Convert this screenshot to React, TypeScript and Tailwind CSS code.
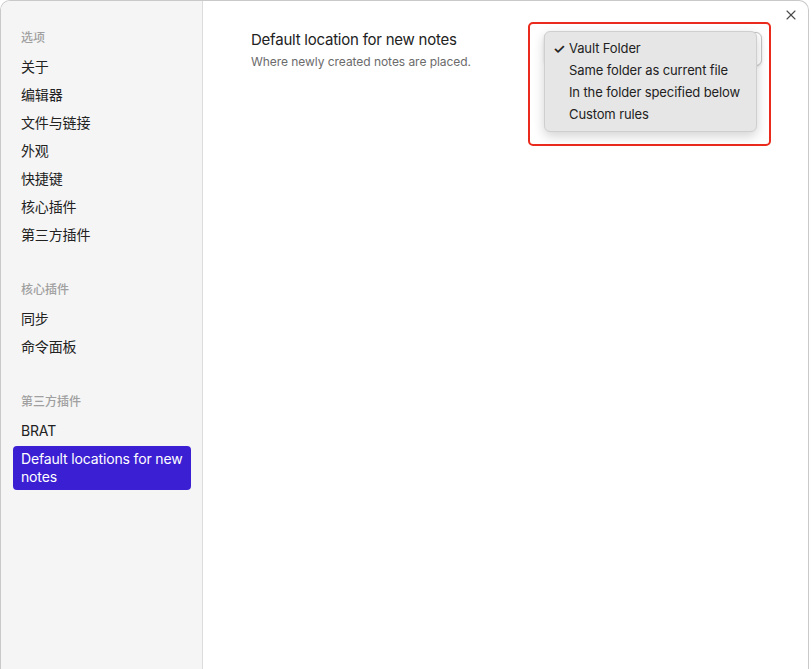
import { X } from 'lucide-react';

const groups = [
  {
    title: '选项',
    items: ['关于', '编辑器', '文件与链接', '外观', '快捷键', '核心插件', '第三方插件'],
  },
  { title: '核心插件', items: ['同步', '命令面板'] },
  { title: '第三方插件', items: ['BRAT'] },
];

const options = ['Vault Folder', 'Same folder as current file', 'In the folder specified below', 'Custom rules'];

const font = "font-['Inter','Noto_Sans_CJK_SC',sans-serif]";

export default function App() {
  return (
    <div className={`h-[669px] w-[811px] bg-white ${font}`}>
      <div className="flex h-[669px] w-[809px] overflow-hidden rounded-t-[10px] border border-b-0 border-[#c9c9c9]">
        {/* sidebar */}
        <aside className="w-[202px] shrink-0 border-r border-[#dcdcdc] bg-[#f5f5f5] pl-[12px] pr-[11px] pt-[22px]">
          {groups.map((g, gi) => (
            <div key={g.title} className={gi > 0 ? 'mt-[27px]' : ''}>
              <div className="flex h-[29px] items-center px-[8px] text-[12px] font-medium text-[#a0a0a0]">{g.title}</div>
              {g.items.map((it) => (
                <div key={it} className="flex h-[28px] items-center px-[8px] text-[14px] tracking-[-0.15px] text-[#222]">
                  {it}
                </div>
              ))}
            </div>
          ))}
          <div className="mt-[2px] rounded-[4px] bg-[#3b1fd3] px-[8px] py-[4px] text-[14px] leading-[18px] tracking-[-0.15px] whitespace-nowrap text-white">
            Default locations for new
            <br />
            notes
          </div>
        </aside>

        {/* content */}
        <main className="relative flex-1 pl-[48px] pr-[46px] pt-[30px]">
          <button className="absolute right-[9px] top-[6px] text-[#4a4a4a]">
            <X size={16} strokeWidth={1.7} />
          </button>
          <div className="flex items-start justify-between">
            <div>
              <div className="text-[15px] leading-[18px] tracking-[-0.23px] text-[#222]">Default location for new notes</div>
              <div className="mt-[5px] text-[12px] leading-[15px] tracking-[-0.05px] text-[#6b6b6b]">Where newly created notes are placed.</div>
            </div>
            <div className="relative mt-[1px] h-[34px] w-[218px] rounded-[6px] border border-[#c4c4c4] bg-white shadow-sm">
              <div className="pointer-events-none absolute -left-[17px] -top-[11px] h-[124px] w-[243px] rounded-[5px] border-2 border-[#ea2a1c]" />
              <div className="absolute -left-px -top-[2px] w-[213px] rounded-[6px] border border-[#cfcfcf] bg-[#e6e6e6] pb-[5px] pt-[6px] shadow-[0_4px_12px_rgba(0,0,0,0.18)]">
                {options.map((o, i) => (
                  <div key={o} className="flex h-[22px] items-center text-[13px] tracking-[-0.12px] text-[#222]">
                    <span className="w-[24px] pl-[8px] text-[14px] font-semibold leading-none">{i === 0 ? '✓' : ''}</span>
                    {o}
                  </div>
                ))}
              </div>
            </div>
          </div>
        </main>
      </div>
    </div>
  );
}
